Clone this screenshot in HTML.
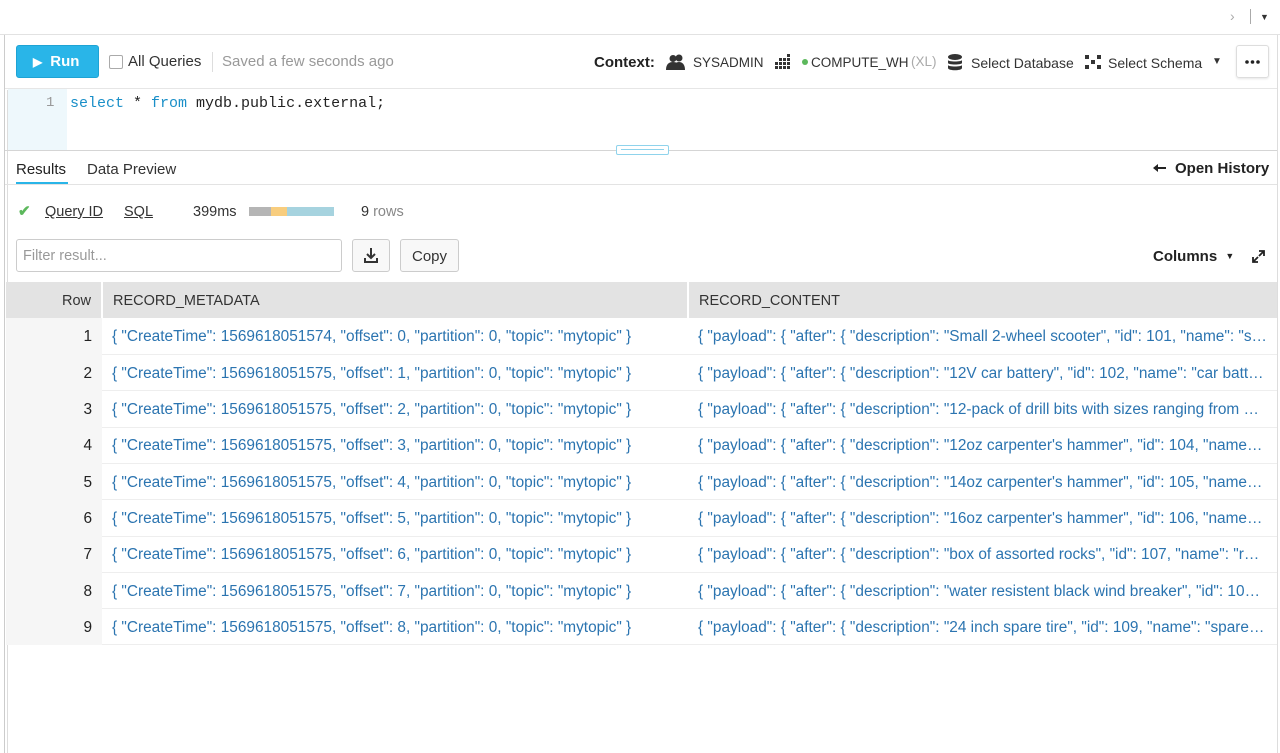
<!DOCTYPE html>
<html><head><meta charset="utf-8"><style>
*{box-sizing:border-box;margin:0;padding:0}
body{width:1280px;height:753px;overflow:hidden;background:#fff;font-family:"Liberation Sans",sans-serif;color:#222;position:relative}
.a{position:absolute;white-space:nowrap}
.mono{font-family:"Liberation Mono",monospace}
table{position:absolute;left:6px;top:282px;width:1271px;border-collapse:collapse;table-layout:fixed;font-size:15.4px}
td,th{height:36.3px;padding:0 10px;white-space:nowrap;overflow:hidden;text-overflow:ellipsis;font-weight:normal;text-align:left}
th{background:#e3e3e3;color:#333;border-left:2px solid #fff;font-size:14.5px;padding-top:2px}
th:first-child{border-left:none;text-align:right}
td{color:#2b74b0;border-bottom:1px solid #eee;padding-top:2px}
td:first-child{background:#f6f6f6;color:#222;text-align:right;border-bottom:1px solid #f6f6f6}
</style></head><body>
<div class="a" style="left:0;top:34px;width:1280px;height:1px;background:#e2e2e2"></div>
<div class="a" style="left:1230px;top:8px;color:#aaa;font-size:14px">›</div>
<div class="a" style="left:1250px;top:9px;width:1px;height:15px;background:#aaa"></div>
<div class="a" style="left:1260px;top:12px;font-size:9px;color:#333">▼</div>
<div class="a" style="left:4px;top:35px;width:1px;height:718px;background:#ccc"></div>
<div class="a" style="left:7px;top:90px;width:1px;height:663px;background:#ddd"></div>
<div class="a" style="left:1277px;top:35px;width:1px;height:718px;background:#ddd"></div>
<!-- toolbar -->
<div class="a" style="left:16px;top:45px;width:83px;height:33px;background:#29b5e8;border-radius:3px;border:1px solid #1ea3d4;color:#fff;font-weight:bold;font-size:15px;line-height:31px;padding-left:16px"><span style="font-size:12px;margin-right:8px">▶</span>Run</div>
<div class="a" style="left:109px;top:55px;width:14px;height:14px;border:1px solid #aaa;border-radius:2px"></div>
<div class="a" style="left:128px;top:53px;font-size:15px;color:#333">All Queries</div>
<div class="a" style="left:212px;top:52px;width:1px;height:20px;background:#ddd"></div>
<div class="a" style="left:222px;top:53px;font-size:15px;color:#999">Saved a few seconds ago</div>
<div class="a" style="left:594px;top:54px;font-size:15px;font-weight:bold;color:#222">Context:</div>
<svg class="a" style="left:665px;top:54px" width="22" height="16"><g fill="#333"><circle cx="14" cy="4" r="3.5"/><path d="M8 16c0-6 3-8 6-8s6 2 6 8z"/><circle cx="8" cy="4.5" r="3.5"/><path d="M1 16c0-6 3-8 7-8s7 2 7 8z"/></g></svg>
<div class="a" style="left:693px;top:55px;font-size:13.5px;color:#333">SYSADMIN</div>
<svg class="a" style="left:775px;top:54px" width="18" height="17"><g fill="#333"><rect x="12" y="0" width="3" height="3"/><rect x="8" y="4" width="3" height="3"/><rect x="12" y="4" width="3" height="3"/><rect x="4" y="4" width="3" height="3"/><rect x="0" y="8" width="3" height="3"/><rect x="4" y="8" width="3" height="3"/><rect x="8" y="8" width="3" height="3"/><rect x="12" y="8" width="3" height="3"/><rect x="0" y="12" width="3" height="3"/><rect x="4" y="12" width="3" height="3"/><rect x="8" y="12" width="3" height="3"/><rect x="12" y="12" width="3" height="3"/></g></svg>
<div class="a" style="left:802px;top:59px;width:6px;height:6px;border-radius:50%;background:#5cb85c"></div>
<div class="a" style="left:811px;top:55px;font-size:13.5px;color:#333">COMPUTE_WH</div>
<div class="a" style="left:911px;top:54px;font-size:13.5px;color:#aaa">(XL)</div>
<svg class="a" style="left:948px;top:54px" width="14" height="17"><g fill="#333"><ellipse cx="7" cy="3" rx="7" ry="3"/><path d="M0 6c0 2 14 2 14 0v3c0 2-14 2-14 0z"/><path d="M0 11c0 2 14 2 14 0v3c0 3-14 3-14 0z"/></g></svg>
<div class="a" style="left:971px;top:55px;font-size:14px;color:#333">Select Database</div>
<svg class="a" style="left:1085px;top:54px" width="16" height="16"><g fill="#333"><rect x="0" y="1" width="4" height="4"/><rect x="12" y="1" width="4" height="4"/><rect x="6" y="6" width="4" height="4"/><rect x="0" y="11" width="4" height="4"/><rect x="12" y="11" width="4" height="4"/></g></svg>
<div class="a" style="left:1108px;top:55px;font-size:14px;color:#333">Select Schema</div>
<div class="a" style="left:1212px;top:56px;font-size:10px;color:#333">▼</div>
<div class="a" style="left:1236px;top:45px;width:33px;height:33px;border:1px solid #ddd;border-radius:3px;box-shadow:0 1px 2px rgba(0,0,0,.1)"><svg width="31" height="31"><g fill="#222"><circle cx="10" cy="16" r="1.8"/><circle cx="15.5" cy="16" r="1.8"/><circle cx="21" cy="16" r="1.8"/></g></svg></div>
<div class="a" style="left:5px;top:88px;width:1272px;height:1px;background:#e6e6e6"></div>
<!-- editor -->
<div class="a" style="left:8px;top:89px;width:59px;height:61px;background:#eef8fc"></div>
<div class="a mono" style="left:46px;top:95px;font-size:14px;color:#999">1</div>
<div class="a mono" style="left:70px;top:95px;font-size:15px;color:#222"><span style="color:#1a8fc8">select</span> * <span style="color:#1a8fc8">from</span> mydb.public.external;</div>
<div class="a" style="left:5px;top:150px;width:1272px;height:1px;background:#d5d5d5"></div>
<div class="a" style="left:616px;top:145px;width:53px;height:10px;border:1px solid #8fd3ec;border-radius:2px;background:#fff"><div style="margin:3px 4px;height:1px;background:#8fd3ec"></div></div>
<!-- tabs -->
<div class="a" style="left:16px;top:161px;font-size:15px;color:#222">Results</div>
<div class="a" style="left:16px;top:182px;width:52px;height:2px;background:#29b5e8"></div>
<div class="a" style="left:87px;top:161px;font-size:15px;color:#333">Data Preview</div>
<svg class="a" style="left:1153px;top:163px" width="13" height="10"><path d="M0 5l5-4v3h8v2H5v3z" fill="#222"/></svg>
<div class="a" style="left:1175px;top:160px;font-size:15px;font-weight:bold;color:#222">Open History</div>
<div class="a" style="left:5px;top:184px;width:1272px;height:1px;background:#e3e3e3"></div>
<!-- status -->
<div class="a" style="left:18px;top:202px;font-size:15px;color:#5cb85c;font-weight:bold">✔</div>
<div class="a" style="left:45px;top:204px;font-size:14.5px;text-decoration:underline;color:#333">Query ID</div>
<div class="a" style="left:124px;top:204px;font-size:14.5px;text-decoration:underline;color:#333">SQL</div>
<div class="a" style="left:193px;top:204px;font-size:14.5px;color:#333">399ms</div>
<div class="a" style="left:249px;top:207px;width:22px;height:9px;background:#b5b5b5"></div>
<div class="a" style="left:271px;top:207px;width:16px;height:9px;background:#f8cd7e"></div>
<div class="a" style="left:287px;top:207px;width:47px;height:9px;background:#a6d3df"></div>
<div class="a" style="left:361px;top:204px;font-size:14.5px;color:#333">9 <span style="color:#888">rows</span></div>
<!-- filter -->
<div class="a" style="left:16px;top:239px;width:326px;height:33px;border:1px solid #ccc;border-radius:3px;font-size:14.5px;color:#999;line-height:33px;padding-left:6px">Filter result...</div>
<div class="a" style="left:352px;top:239px;width:38px;height:33px;border:1px solid #ccc;border-radius:3px;background:#f8f8f8"><svg width="38" height="31"><path d="M18 8v10M14 14l4 4 4-4M12 18v4h12v-4" stroke="#333" stroke-width="2" fill="none"/></svg></div>
<div class="a" style="left:400px;top:239px;width:59px;height:33px;border:1px solid #ccc;border-radius:3px;background:#f8f8f8;font-size:15px;color:#333;line-height:33px;text-align:center">Copy</div>
<div class="a" style="left:1153px;top:248px;font-size:15px;font-weight:bold;color:#222">Columns <span style="font-size:9px;margin-left:4px;vertical-align:2px">▼</span></div>
<svg class="a" style="left:1252px;top:250px" width="13" height="13"><path d="M7 1h5v5M12 1L7 6M6 12H1V7M1 12l5-5" stroke="#222" stroke-width="1.8" fill="none"/></svg>
<table>
<colgroup><col style="width:96px"><col style="width:586px"><col style="width:589px"></colgroup>
<tr><th>Row</th><th>RECORD_METADATA</th><th>RECORD_CONTENT</th></tr>
<tr><td>1</td><td>{ "CreateTime": 1569618051574, "offset": 0, "partition": 0, "topic": "mytopic" }</td><td>{ "payload": { "after": { "description": "Small 2-wheel scooter", "id": 101, "name": "scooter" } } }</td></tr>
<tr><td>2</td><td>{ "CreateTime": 1569618051575, "offset": 1, "partition": 0, "topic": "mytopic" }</td><td>{ "payload": { "after": { "description": "12V car battery", "id": 102, "name": "car battery" } } }</td></tr>
<tr><td>3</td><td>{ "CreateTime": 1569618051575, "offset": 2, "partition": 0, "topic": "mytopic" }</td><td>{ "payload": { "after": { "description": "12-pack of drill bits with sizes ranging from #40 to #3" } } }</td></tr>
<tr><td>4</td><td>{ "CreateTime": 1569618051575, "offset": 3, "partition": 0, "topic": "mytopic" }</td><td>{ "payload": { "after": { "description": "12oz carpenter's hammer", "id": 104, "name": "hammer" } } }</td></tr>
<tr><td>5</td><td>{ "CreateTime": 1569618051575, "offset": 4, "partition": 0, "topic": "mytopic" }</td><td>{ "payload": { "after": { "description": "14oz carpenter's hammer", "id": 105, "name": "hammer" } } }</td></tr>
<tr><td>6</td><td>{ "CreateTime": 1569618051575, "offset": 5, "partition": 0, "topic": "mytopic" }</td><td>{ "payload": { "after": { "description": "16oz carpenter's hammer", "id": 106, "name": "hammer" } } }</td></tr>
<tr><td>7</td><td>{ "CreateTime": 1569618051575, "offset": 6, "partition": 0, "topic": "mytopic" }</td><td>{ "payload": { "after": { "description": "box of assorted rocks", "id": 107, "name": "rocks" } } }</td></tr>
<tr><td>8</td><td>{ "CreateTime": 1569618051575, "offset": 7, "partition": 0, "topic": "mytopic" }</td><td>{ "payload": { "after": { "description": "water resistent black wind breaker", "id": 108, "name": "jacket" } } }</td></tr>
<tr><td>9</td><td>{ "CreateTime": 1569618051575, "offset": 8, "partition": 0, "topic": "mytopic" }</td><td>{ "payload": { "after": { "description": "24 inch spare tire", "id": 109, "name": "spare tire" } } }</td></tr>
</table>
</body></html>
